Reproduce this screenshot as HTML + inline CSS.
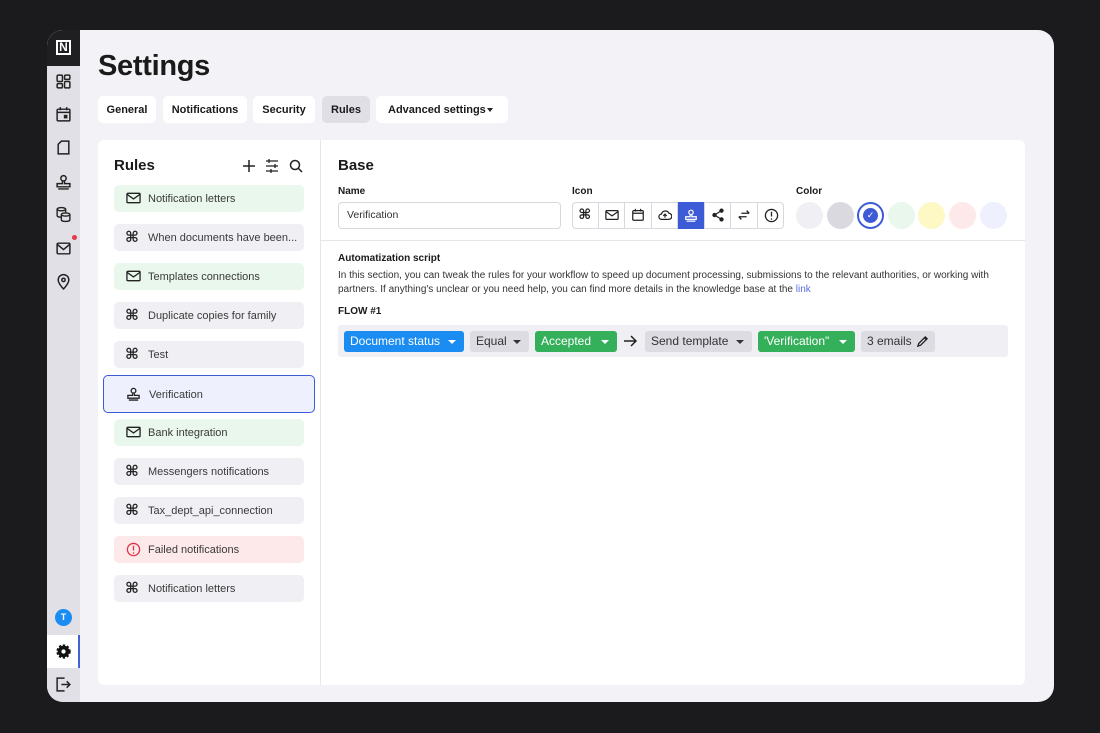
<!DOCTYPE html>
<html><head><style>
*{box-sizing:border-box;margin:0;padding:0}
body{width:1100px;height:733px;background:#1b1b1d;font-family:"Liberation Sans",sans-serif;position:relative;overflow:hidden;color:#1a1a1a}
.dev{position:absolute;left:47px;top:30px;width:1007px;height:672px;border-radius:16px;background:#f3f2f7;overflow:hidden}
.side{position:absolute;left:0;top:0;width:33px;height:672px;background:#e1e0e7}
.logo{position:absolute;left:0;top:0;width:33px;height:36px;background:#1f1f21}
.logo div{position:absolute;left:9px;top:10px;width:15px;height:15px;border:2px solid #fff;color:#fff;font-size:12px;font-weight:bold;line-height:11px;text-align:center}
.si{position:absolute;left:8px;width:17px;height:17px}
h1{position:absolute;left:51px;top:20px;font-size:29px;font-weight:bold;letter-spacing:-.3px}
.tab{position:absolute;top:66px;height:27px;background:#fff;border-radius:5px;font-size:11px;font-weight:bold;line-height:28px;text-align:center}
.panel{position:absolute;left:51px;top:110px;width:927px;height:545px;background:#fff;border-radius:6px}
.sep{position:absolute;left:222px;top:0;width:1px;height:545px;background:#e6e5ec}
.it{position:absolute;left:16px;width:190px;height:27px;border-radius:5px;background:#f0eff4;font-size:11px;color:#3a3a3a;line-height:29px;padding-left:34px}
.it svg{position:absolute;left:12px;top:6px}
.k{position:absolute;left:11px;top:-1px;font-family:"DejaVu Sans",sans-serif;font-size:15px;color:#222;font-weight:bold}
.g{background:#e9f7ec}.r{background:#fde8ea}
.lbl{position:absolute;font-size:10px;font-weight:bold}
.ic{position:absolute;top:62px;width:26.5px;height:27px;border-right:1px solid #d8d7de;text-align:center}
.ic svg{position:absolute;left:6px;top:6px}
.c{position:absolute;top:62px;width:27px;height:27px;border-radius:50%}
.chip{position:absolute;top:191px;height:21px;border-radius:3px;font-size:12px;line-height:21px;padding-left:6px}
.chip b{position:absolute;right:8px;top:9px;border:4px solid transparent;border-top:4px solid currentColor;border-bottom:0}
</style></head><body>
<div class="dev">
<div class="side">
<div class="logo"><div>N</div></div>
<svg class="si" style="top:43px" viewBox="0 0 16 16" fill="none" stroke="#222" stroke-width="1.4"><rect x="2" y="2" width="5" height="6" rx="1"/><rect x="9" y="2" width="5" height="4" rx="1"/><rect x="2" y="10" width="5" height="4" rx="1"/><rect x="9" y="8" width="5" height="6" rx="1"/></svg>
<svg class="si" style="top:76px" viewBox="0 0 16 16" fill="none" stroke="#222" stroke-width="1.4"><rect x="2" y="3" width="12" height="11" rx="1"/><path d="M2 6h12M5 1v3M11 1v3"/><rect x="9" y="9" width="2" height="2" fill="#222"/></svg>
<svg class="si" style="top:109px" viewBox="0 0 16 16" fill="none" stroke="#222" stroke-width="1.4"><path d="M6 2h7v12H3V5z"/></svg>
<svg class="si" style="top:143px" viewBox="0 0 16 16" fill="none" stroke="#222" stroke-width="1.4"><circle cx="8" cy="5" r="2.5"/><path d="M7 8v2H2v3h12v-3H9V8M3 15h10"/></svg>
<svg class="si" style="top:176px" viewBox="0 0 16 16" fill="none" stroke="#222" stroke-width="1.3"><ellipse cx="6" cy="3" rx="4" ry="1.5"/><path d="M2 3v6c0 1 2 1.5 4 1.5M10 3v3"/><ellipse cx="10" cy="8" rx="4" ry="1.5"/><path d="M6 8v5c0 1 2 1.5 4 1.5s4-.5 4-1.5V8"/></svg>
<svg class="si" style="top:210px" viewBox="0 0 16 16" fill="none" stroke="#222" stroke-width="1.4"><rect x="2" y="3" width="12" height="10" rx="1"/><path d="M2 4l6 5 6-5"/></svg>
<div style="position:absolute;left:25px;top:205px;width:5px;height:5px;border-radius:50%;background:#e53945"></div>
<svg class="si" style="top:243px" viewBox="0 0 16 16" fill="none" stroke="#222" stroke-width="1.4"><path d="M8 15s5-5 5-8.5a5 5 0 0 0-10 0C3 10 8 15 8 15z"/><circle cx="8" cy="6.5" r="1.6"/></svg>
<div style="position:absolute;left:8px;top:579px;width:17px;height:17px;border-radius:50%;background:#1b8cf2;color:#fff;font-size:9px;font-weight:bold;text-align:center;line-height:17px">T</div>
<div style="position:absolute;left:0;top:605px;width:33px;height:33px;background:#fff;border-right:2px solid #4260d8"></div>
<svg class="si" style="top:613px" viewBox="0 0 16 16"><circle cx="8" cy="8" r="5.5" fill="#111" stroke="#111" stroke-width="2.5" stroke-dasharray="2 1.6"/><circle cx="8" cy="8" r="2" fill="#fff"/></svg>
<svg class="si" style="top:646px" viewBox="0 0 16 16" fill="none" stroke="#222" stroke-width="1.4"><path d="M9 2H2v12h7M6 8h8M11 5l3 3-3 3"/></svg>
</div>
<h1>Settings</h1>
<div class="tab" style="left:51px;width:58px">General</div>
<div class="tab" style="left:116px;width:84px">Notifications</div>
<div class="tab" style="left:206px;width:62px">Security</div>
<div class="tab" style="left:275px;width:48px;background:#e0dfe6">Rules</div>
<div class="tab" style="left:329px;width:132px;text-align:left;padding-left:12px">Advanced settings<span style="position:absolute;left:111px;top:12px;border:3px solid transparent;border-top:4px solid #222;border-bottom:0"></span></div>
<div class="panel">
<div class="sep"></div>
<div style="position:absolute;left:16px;top:17px;font-size:15px;font-weight:bold">Rules</div>
<svg style="position:absolute;left:144px;top:19px" width="14" height="14" viewBox="0 0 14 14" stroke="#222" stroke-width="1.5"><path d="M7 1v12M1 7h12"/></svg>
<svg style="position:absolute;left:167px;top:19px" width="14" height="14" viewBox="0 0 14 14" stroke="#222" stroke-width="1.3" fill="none"><path d="M1 2h12M1 7h12M1 12h12M4 0v4M10 5v4M6 10v4"/></svg>
<svg style="position:absolute;left:191px;top:19px" width="14" height="14" viewBox="0 0 14 14" stroke="#222" stroke-width="1.5" fill="none"><circle cx="6" cy="6" r="4.5"/><path d="M9.5 9.5L13 13"/></svg>
<div class="it g" style="top:45px"><svg width="15" height="14" viewBox="0 0 16 14" fill="none" stroke="#222" stroke-width="1.4"><rect x="1" y="2" width="14" height="10" rx="1"/><path d="M1 3l7 5 7-5"/></svg>Notification letters</div>
<div class="it" style="top:84px"><span class="k">⌘</span>When documents have been...</div>
<div class="it g" style="top:123px"><svg width="15" height="14" viewBox="0 0 16 14" fill="none" stroke="#222" stroke-width="1.4"><rect x="1" y="2" width="14" height="10" rx="1"/><path d="M1 3l7 5 7-5"/></svg>Templates connections</div>
<div class="it" style="top:162px"><span class="k">⌘</span>Duplicate copies for family</div>
<div class="it" style="top:201px"><span class="k">⌘</span>Test</div>
<div class="it" style="top:235px;left:5px;width:212px;height:38px;line-height:38px;background:#eef1fd;border:1.5px solid #3d5bd6;padding-left:45px"><svg style="left:22px;top:10px" width="15" height="15" viewBox="0 0 16 16" fill="none" stroke="#222" stroke-width="1.4"><circle cx="8" cy="5" r="2.5"/><path d="M7 8v2H2v3h12v-3H9V8M3 15h10"/></svg>Verification</div>
<div class="it g" style="top:279px"><svg width="15" height="14" viewBox="0 0 16 14" fill="none" stroke="#222" stroke-width="1.4"><rect x="1" y="2" width="14" height="10" rx="1"/><path d="M1 3l7 5 7-5"/></svg>Bank integration</div>
<div class="it" style="top:318px"><span class="k">⌘</span>Messengers notifications</div>
<div class="it" style="top:357px"><span class="k">⌘</span>Tax_dept_api_connection</div>
<div class="it r" style="top:396px"><svg width="15" height="15" viewBox="0 0 16 16" fill="none" stroke="#e03345" stroke-width="1.4"><circle cx="8" cy="8" r="6.5"/><path d="M8 4v5M8 11v1.5"/></svg>Failed notifications</div>
<div class="it" style="top:435px"><span class="k">⌘</span>Notification letters</div>
<div style="position:absolute;left:240px;top:17px;font-size:15px;font-weight:bold">Base</div>
<div class="lbl" style="left:240px;top:46px">Name</div>
<div style="position:absolute;left:240px;top:62px;width:223px;height:27px;border:1px solid #d8d7de;border-radius:4px;font-size:10.5px;line-height:25px;padding-left:8px;color:#333">Verification</div>
<div class="lbl" style="left:474px;top:46px">Icon</div>
<div style="position:absolute;left:474px;top:62px;width:212px;height:27px;border:1px solid #d8d7de;border-radius:4px;overflow:hidden"></div>
<div class="ic" style="left:474px"><span style="font-family:'DejaVu Sans',sans-serif;font-size:14px;font-weight:bold;line-height:27px">⌘</span></div>
<div class="ic" style="left:500.5px"><svg width="14" height="14" viewBox="0 0 16 14" fill="none" stroke="#222" stroke-width="1.4"><rect x="1" y="2" width="14" height="10" rx="1"/><path d="M1 3l7 5 7-5"/></svg></div>
<div class="ic" style="left:527px"><svg width="14" height="14" viewBox="0 0 16 16" fill="none" stroke="#222" stroke-width="1.4"><rect x="2" y="3" width="12" height="11" rx="1"/><path d="M2 6h12M5 1v3M11 1v3"/></svg></div>
<div class="ic" style="left:553.5px"><svg width="14" height="14" viewBox="0 0 16 16" fill="none" stroke="#222" stroke-width="1.4"><path d="M4 13a3 3 0 0 1 0-6 4.5 4.5 0 0 1 8.5-1A3.5 3.5 0 0 1 12 13zM8 11V7M6 9l2-2 2 2"/></svg></div>
<div class="ic" style="left:580px;background:#3d5bd6"><svg width="14" height="14" viewBox="0 0 16 16" fill="none" stroke="#fff" stroke-width="1.4"><circle cx="8" cy="5" r="2.5"/><path d="M7 8v2H2v3h12v-3H9V8M3 15h10"/></svg></div>
<div class="ic" style="left:606.5px"><svg width="14" height="14" viewBox="0 0 16 16" fill="#222" stroke="#222" stroke-width="1.4"><circle cx="4" cy="8" r="1.8"/><circle cx="12" cy="3" r="1.8"/><circle cx="12" cy="13" r="1.8"/><path d="M4 8l8-5M4 8l8 5"/></svg></div>
<div class="ic" style="left:633px"><svg width="14" height="14" viewBox="0 0 16 16" fill="none" stroke="#222" stroke-width="1.5"><path d="M5 6h9M11 3l3 3M11 10H2M5 13l-3-3"/></svg></div>
<div class="ic" style="left:659.5px;border:0"><svg width="15" height="15" viewBox="0 0 16 16" fill="none" stroke="#222" stroke-width="1.4"><circle cx="8" cy="8" r="6.5"/><path d="M8 4v5M8 11v1.5"/></svg></div>
<div class="lbl" style="left:698px;top:46px">Color</div>
<div class="c" style="left:698px;background:#f0eff4"></div>
<div class="c" style="left:729px;background:#dad9e0"></div>
<div class="c" style="left:759px;border:2px solid #3d5bd6;background:#fff"><div style="position:absolute;left:4px;top:4px;width:15px;height:15px;border-radius:50%;background:#3d5bd6;color:#fff;font-size:9px;text-align:center;line-height:15px">✓</div></div>
<div class="c" style="left:790px;background:#e9f7ec"></div>
<div class="c" style="left:820px;background:#fdf8c4"></div>
<div class="c" style="left:851px;background:#fde8ea"></div>
<div class="c" style="left:882px;background:#eef0fd"></div>
<div style="position:absolute;left:222px;top:100px;width:705px;height:1px;background:#e6e5ec"></div>
<div class="lbl" style="left:240px;top:113px">Automatization script</div>
<div style="position:absolute;left:240px;top:129px;width:680px;font-size:10px;line-height:14px;color:#333">In this section, you can tweak the rules for your workflow to speed up document processing, submissions to the relevant authorities, or working with partners. If anything's unclear or you need help, you can find more details in the knowledge base at the <span style="color:#5b6ee1">link</span></div>
<div class="lbl" style="left:240px;top:166px">FLOW #1</div>
<div style="position:absolute;left:240px;top:185px;width:670px;height:32px;background:#f0eff4;border-radius:3px"></div>
<div class="chip" style="left:246px;width:120px;background:#1b8cf2;color:#fff">Document status<b></b></div>
<div class="chip" style="left:372px;width:59px;background:#dddce3;color:#333">Equal<b></b></div>
<div class="chip" style="left:437px;width:82px;background:#34b05a;color:#fff">Accepted<b></b></div>
<svg style="position:absolute;left:525px;top:195px" width="15" height="12" viewBox="0 0 15 12" fill="none" stroke="#222" stroke-width="1.5"><path d="M1 6h12M8 1l5 5-5 5"/></svg>
<div class="chip" style="left:547px;width:107px;background:#dddce3;color:#333">Send template<b></b></div>
<div class="chip" style="left:660px;width:97px;background:#34b05a;color:#fff">'Verification"<b></b></div>
<div class="chip" style="left:763px;width:74px;background:#dddce3;color:#333">3 emails <svg style="position:absolute;right:6px;top:4px" width="13" height="13" viewBox="0 0 14 14" fill="none" stroke="#222" stroke-width="1.4"><path d="M2 12l1-3 7-7 2 2-7 7zM9 3l2 2"/></svg></div>
</div>
</div>
</body></html>
